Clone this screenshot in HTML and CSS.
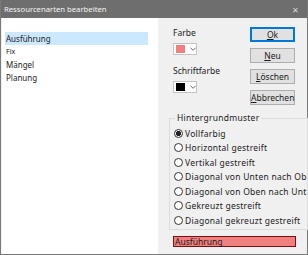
FILE: index.html
```html
<!DOCTYPE html>
<html lang="de">
<head>
  <meta charset="UTF-8" />
  <title>Ressourcenarten bearbeiten</title>
  <link rel="stylesheet" href="styles.css">
</head>
<body>
  <div class="window">
    <div class="titlebar">
      <span class="title">Ressourcenarten bearbeiten</span>
      <span class="close">&#x2715;</span>
    </div>
    <div class="content">
      <div class="list">
        <div class="item selected">Ausführung</div>
        <div class="item small">Fix</div>
        <div class="item">Mängel</div>
        <div class="item">Planung</div>
      </div>
      <div class="panel">
        <div class="top-row">
          <div class="colors">
            <div class="label">Farbe</div>
            <div class="combo">
              <span class="swatch swatch-pink"></span>
              <svg class="chevron" width="7" height="4" viewBox="0 0 7 4"><polyline points="0.5,0.5 3.5,3.5 6.5,0.5" fill="none" stroke="#555" stroke-width="1"/></svg>
            </div>
            <div class="label label-second">Schriftfarbe</div>
            <div class="combo">
              <span class="swatch swatch-black"></span>
              <svg class="chevron" width="7" height="4" viewBox="0 0 7 4"><polyline points="0.5,0.5 3.5,3.5 6.5,0.5" fill="none" stroke="#555" stroke-width="1"/></svg>
            </div>
          </div>
          <div class="buttons">
            <button class="btn default"><u>O</u>k</button>
            <button class="btn"><u>N</u>eu</button>
            <button class="btn"><u>L</u>öschen</button>
            <button class="btn"><u>A</u>bbrechen</button>
          </div>
        </div>
        <fieldset class="group">
          <legend>Hintergrundmuster</legend>
          <div class="option"><span class="radio checked"></span>Vollfarbig</div>
          <div class="option"><span class="radio"></span>Horizontal gestreift</div>
          <div class="option"><span class="radio"></span>Vertikal gestreift</div>
          <div class="option"><span class="radio"></span>Diagonal von Unten nach Ob</div>
          <div class="option"><span class="radio"></span>Diagonal von Oben nach Unt</div>
          <div class="option"><span class="radio"></span>Gekreuzt gestreift</div>
          <div class="option"><span class="radio"></span>Diagonal gekreuzt gestreift</div>
        </fieldset>
        <div class="preview">Ausführung</div>
      </div>
    </div>
  </div>
</body>
</html>
```

FILE: styles.css
```css
* {
  box-sizing: border-box;
}
body {
  margin: 0;
  font-family: 'Noto Sans', 'Open Sans', sans-serif;
  font-size: 8.5px;
  color: #1a1a1a;
}
.window {
  width: 308px;
  height: 255px;
  background-color: #f0f0f0;
  border: 1px solid #7a7a7a;
  border-top: none;
  display: flex;
  flex-direction: column;
}
.titlebar {
  height: 18px;
  background-color: #6e6e6e;
  color: #f4f4f4;
  display: flex;
  align-items: center;
  justify-content: space-between;
  padding: 0 8px 0 3px;
}
.title {
  font-size: 7.7px;
}
.close {
  font-size: 8px;
  color: #d8d8d8;
}
.content {
  flex: 1;
  display: flex;
}
.list {
  width: 156px;
  flex-shrink: 0;
  margin-left: 1px;
  background-color: #fff;
  padding-top: 14px;
}
.item {
  height: 13px;
  line-height: 13px;
  margin: 0 10px 0 3px;
  padding-left: 1px;
  font-size: 8px;
}
.item.small {
  font-size: 7px;
}
.item.selected {
  background-color: #cce8ff;
}
.panel {
  flex: 1;
  min-width: 0;
  padding: 9px 10px 0 11px;
}
.top-row {
  display: flex;
  padding-left: 4px;
}
.colors {
  width: 77px;
}
.label {
  height: 12px;
  line-height: 12px;
  margin-bottom: 4px;
}
.label-second {
  margin-top: 10px;
}
.combo {
  width: 24px;
  height: 12px;
  display: flex;
  align-items: center;
  gap: 5px;
  padding-left: 2px;
  background-color: #fff;
  border: 1px solid #c4c4c4;
}
.swatch {
  width: 10px;
  height: 8px;
}
.swatch-pink {
  background-color: #f08080;
}
.swatch-black {
  background-color: #000;
}
.buttons {
  display: flex;
  flex-direction: column;
  gap: 6px;
}
.btn {
  width: 45px;
  height: 15px;
  padding: 0;
  font-family: inherit;
  font-size: 8.5px;
  color: #1a1a1a;
  background-color: #e1e1e1;
  border: 1px solid #adadad;
}
.btn.default {
  border: 1px solid #0078d7;
  box-shadow: inset 0 0 0 1px #0078d7;
}
.group {
  margin: 8px 0 0;
  padding: 3px 0 1px 4px;
  border: 1px solid #dcdcdc;
  overflow: hidden;
  white-space: nowrap;
}
.group legend {
  padding: 0 2px;
  margin-left: 1px;
  line-height: 10px;
  letter-spacing: 0.25px;
}
.option {
  height: 14.5px;
  display: flex;
  align-items: center;
  gap: 2px;
  letter-spacing: 0.25px;
}
.radio {
  width: 9px;
  height: 9px;
  flex-shrink: 0;
  border: 1px solid #333;
  border-radius: 50%;
  background-color: #fff;
}
.radio.checked {
  background: radial-gradient(circle, #222 0, #222 2.4px, #fff 2.9px);
}
.preview {
  margin: 6px 1px 0 4px;
  height: 11px;
  line-height: 9px;
  padding-left: 1px;
  background-color: #f08080;
  border: 1px solid #7a1010;
  color: #1a1a1a;
}
```
